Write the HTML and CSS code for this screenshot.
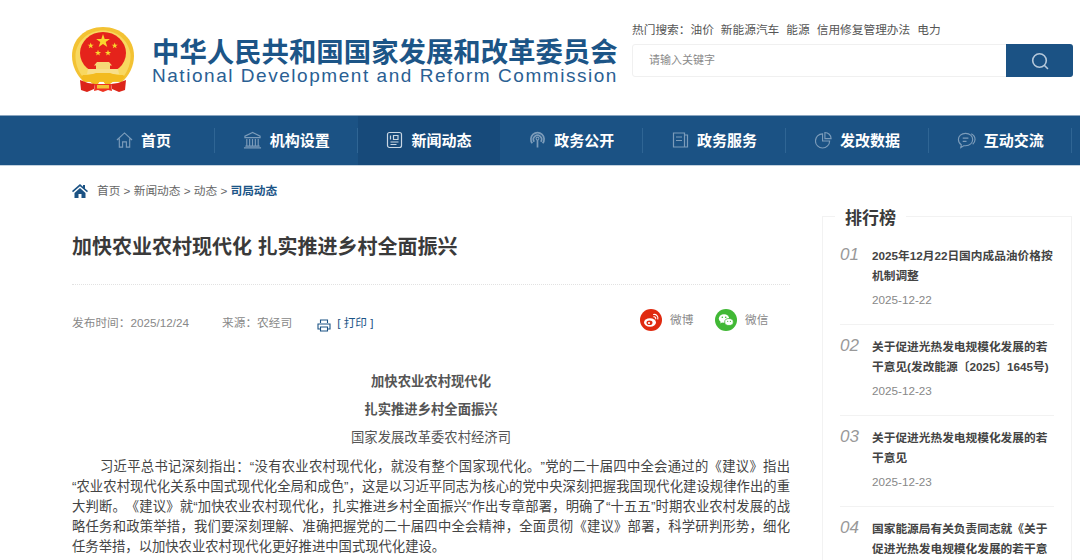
FILE: index.html
```html
<!DOCTYPE html>
<html lang="zh-CN">
<head>
<meta charset="utf-8">
<title>加快农业农村现代化 扎实推进乡村全面振兴</title>
<link rel="stylesheet" href="styles.css">
</head>
<body>
<header class="header">
  <div class="brand">
    <svg class="emblem" viewBox="0 0 62 66" aria-hidden="true">
      <path d="M31 0C13 0 0 12 0 29c0 10 5 20 12 26h38c7-6 12-16 12-26C62 12 49 0 31 0z" fill="#f3c233"/>
      <path d="M31 3.500C17 3.500 5.500 13 3.500 27 3 36 6 44 11 50c4-2 8-3 10-3h20c2 0 6 1 10 3 5-6 8-14 7.500-23C56.500 13 45 3.500 31 3.500z" fill="#f8d860"/>
      <ellipse cx="31" cy="26" rx="23" ry="21" fill="#e5231b"/>
      <path d="M31 7l1.700 4.900h5.200l-4.200 3.100 1.600 5-4.300-3.100-4.300 3.100 1.600-5-4.200-3.100h5.200z" fill="#f9d72e"/>
      <path d="M18.700 15.500l.8 2.200h2.300l-1.900 1.400.7 2.200-1.900-1.300-1.900 1.300.7-2.200-1.900-1.400h2.300zM42.700 15.500l.8 2.200h2.300l-1.900 1.400.7 2.200-1.900-1.300-1.900 1.300.7-2.200-1.900-1.400h2.300zM26 22.800l.8 2.200h2.300l-1.900 1.400.7 2.200-1.900-1.300-1.900 1.300.7-2.200-1.900-1.400h2.300zM36 22.800l.8 2.200h2.300l-1.900 1.400.7 2.200-1.900-1.300-1.900 1.300.7-2.200-1.900-1.400h2.300z" fill="#f9d72e"/>
      <path d="M25 35h12l3 3.500h-2v3.500H24v-3.500h-2z" fill="#f6d977"/>
      <path d="M16 42h30l1 5H15z" fill="#f8df8a"/>
      <path d="M9 50l2-2 7 0 6-2h14l6 2 7 0 2 2-5 4-6 0-4 3h-5l-2-3-3 0-2 3h-5l-4-3-6 0z" fill="#f3bb1f"/>
      <path d="M8 53l8 3 7 1-1 5-7 3-6-2zM54 53l-8 3-7 1 1 5 7 3 6-2z" fill="#dc2419"/>
      <path d="M23 57h16l1 7-4-1-5 2-5-2-4 1z" fill="#ee3322"/>
      <path d="M25 58h12v3.500H25z" fill="#f3c233"/>
    </svg>
    <div class="brand-text">
      <div class="brand-cn">中华人民共和国国家发展和改革委员会</div>
      <div class="brand-en">National Development and Reform Commission</div>
    </div>
  </div>
  <div class="search-area">
    <div class="hot">
      <span>热门搜索：</span><span>油价</span><span>新能源汽车</span><span>能源</span><span>信用修复管理办法</span><span>电力</span>
    </div>
    <div class="search">
      <div class="search-input">请输入关键字</div>
      <div class="search-btn">
        <svg viewBox="0 0 20 20" class="search-icon" aria-hidden="true">
          <circle cx="9.500" cy="9.500" r="6.800" fill="none" stroke="#b5c8da" stroke-width="1.600"/>
          <path d="M14.500 14.500l3 3" stroke="#b5c8da" stroke-width="1.600" stroke-linecap="round"/>
        </svg>
      </div>
    </div>
  </div>
</header>

<nav class="nav">
  <a class="nav-item">
    <svg class="nav-icon" viewBox="0 0 18 18" aria-hidden="true"><path d="M1 9l8-7.500L17 9M3.500 7.500V16.500H7V11h4v5.500h3.500V7.500"/></svg>首页
  </a>
  <a class="nav-item">
    <svg class="nav-icon wide" viewBox="0 0 20 18" aria-hidden="true"><path d="M10 1L2 5v1.500h16V5zM4 8v7M7 8v7M10 8v7M13 8v7M16 8v7M2.500 15.500h15M1 17.300h18"/></svg>机构设置
  </a>
  <a class="nav-item active">
    <svg class="nav-icon" viewBox="0 0 16 18" aria-hidden="true"><rect x="1" y="1.500" width="14" height="15" rx="2"/><path d="M4 4.500v4M7 4.500h4.500v4H7zM4 11h8M4 13.500h6"/></svg>新闻动态
  </a>
  <a class="nav-item">
    <svg class="nav-icon" viewBox="0 0 18 18" aria-hidden="true"><path d="M9 17V9M3.500 12.500a7 7 0 1 1 11 0M5.500 10.800a4.300 4.300 0 1 1 7 0" stroke-width="1.800"/><circle cx="9" cy="7.500" r="1.500"/></svg>政务公开
  </a>
  <a class="nav-item">
    <svg class="nav-icon" viewBox="0 0 16 18" aria-hidden="true"><path d="M1 2h11v14H1zM12 4h3v12h-3M3.500 6h6M3.500 9.500h6"/></svg>政务服务
  </a>
  <a class="nav-item">
    <svg class="nav-icon" viewBox="0 0 18 18" aria-hidden="true"><path d="M8 2.500a7.500 7.500 0 1 0 7.500 7.500H8z"/><path d="M10.500 1a6.500 6.500 0 0 1 6.500 6.500h-6.500z"/></svg>发改数据
  </a>
  <a class="nav-item">
    <svg class="nav-icon wide" viewBox="0 0 20 18" aria-hidden="true"><path d="M9 2c4.500 0 7.500 2.800 7.500 6.500S13.500 15 9 15H7l-3 2 .5-3C2.500 12.800 1.500 10.800 1.500 8.500 1.500 4.800 4.500 2 9 2z"/><path d="M15 2.500c2.500 1.200 4 3.400 4 6 0 2-1 3.800-2.500 5M6 7h6M6 10.500h4"/></svg>互动交流
  </a>
</nav>

<main class="main">
  <article class="article">
    <div class="crumbs">
      <svg class="crumb-home" viewBox="0 0 16 14" aria-hidden="true"><path d="M8 0L0 7l1 1.200L8 2.200l7 6L16 7l-3-2.600V1h-2v1.700zM2.500 9v5h4v-4h3v4h4V9L8 4z"/></svg>
      <span>首页 &gt; 新闻动态 &gt; 动态 &gt; <b class="crumb-current">司局动态</b></span>
    </div>
    <h1 class="title">加快农业农村现代化 扎实推进乡村全面振兴</h1>
    <div class="meta">
      <span class="meta-date">发布时间：2025/12/24</span>
      <span class="meta-source">来源：农经司</span>
      <svg class="print-icon" viewBox="0 0 14 13" aria-hidden="true"><path d="M3.500 4V1h7v3M3 10H1V5h12v5h-2M3.500 8h7v4h-7z"/></svg>
      <span class="print">[ 打印 ]</span>
      <span class="share">
        <svg class="share-icon" viewBox="0 0 22 22" aria-hidden="true"><circle cx="11" cy="11" r="11" fill="#e02a10"/><ellipse cx="10" cy="13.500" rx="6" ry="4.200" fill="#fff"/><ellipse cx="9.500" cy="13.800" rx="3" ry="2.300" fill="#e02a10"/><circle cx="9" cy="14" r="1.100" fill="#fff"/><path d="M13.500 5.500c2.800-.5 5 1.800 4.300 4.500M13.800 7.800c1.300-.2 2.200.8 1.900 2" fill="none" stroke="#fff" stroke-width="1.100" stroke-linecap="round"/></svg>
        <span class="share-text">微博</span>
        <svg class="share-icon" viewBox="0 0 22 22" aria-hidden="true"><circle cx="11" cy="11" r="11" fill="#41b835"/><ellipse cx="9" cy="9.500" rx="5.200" ry="4.300" fill="#fff"/><path d="M6 12.500l-1 2 2.500-1.200z" fill="#fff"/><ellipse cx="14" cy="13" rx="4.300" ry="3.500" fill="#fff" stroke="#41b835" stroke-width=".8"/><circle cx="7.300" cy="8.300" r=".8" fill="#41b835"/><circle cx="10.700" cy="8.300" r=".8" fill="#41b835"/><circle cx="12.700" cy="12.300" r=".6" fill="#41b835"/><circle cx="15.400" cy="12.300" r=".6" fill="#41b835"/></svg>
        <span class="share-text">微信</span>
      </span>
    </div>
    <div class="body">
      <p class="center strong">加快农业农村现代化</p>
      <p class="center strong">扎实推进乡村全面振兴</p>
      <p class="center">国家发展改革委农村经济司</p>
      <p class="para">习近平总书记深刻指出：“没有农业农村现代化，就没有整个国家现代化。”党的二十届四中全会通过的《建议》指出“农业农村现代化关系中国式现代化全局和成色”，这是以习近平同志为核心的党中央深刻把握我国现代化建设规律作出的重大判断。《建议》就“加快农业农村现代化，扎实推进乡村全面振兴”作出专章部署，明确了“十五五”时期农业农村发展的战略任务和政策举措，我们要深刻理解、准确把握党的二十届四中全会精神，全面贯彻《建议》部署，科学研判形势，细化任务举措，以加快农业农村现代化更好推进中国式现代化建设。</p>
    </div>
  </article>

  <aside class="rank">
    <h2 class="rank-title">排行榜</h2>
    <ol class="rank-list">
      <li class="rank-item">
        <span class="rank-num">01</span>
        <div class="rank-body"><div class="rank-name">2025年12月22日国内成品油价格按机制调整</div><div class="rank-date">2025-12-22</div></div>
      </li>
      <li class="rank-item">
        <span class="rank-num">02</span>
        <div class="rank-body"><div class="rank-name">关于促进光热发电规模化发展的若干意见(发改能源〔2025〕1645号)</div><div class="rank-date">2025-12-23</div></div>
      </li>
      <li class="rank-item">
        <span class="rank-num">03</span>
        <div class="rank-body"><div class="rank-name">关于促进光热发电规模化发展的若干意见</div><div class="rank-date">2025-12-23</div></div>
      </li>
      <li class="rank-item">
        <span class="rank-num">04</span>
        <div class="rank-body"><div class="rank-name">国家能源局有关负责同志就《关于促进光热发电规模化发展的若干意</div></div>
      </li>
    </ol>
  </aside>
</main>
</body>
</html>
```

FILE: styles.css
```css
* { box-sizing: border-box; }
html, body { margin: 0; padding: 0; height: 560px; overflow: hidden; background: #fff; }
body { font-family: "Liberation Sans", "Noto Sans CJK SC", sans-serif; color: #444; font-size: 14px; text-spacing-trim: space-all; }

.header { height: 115px; display: flex; justify-content: space-between; padding: 0 7px 0 72px; }
.brand { display: flex; align-items: flex-start; padding-top: 27px; }
.emblem { width: 62px; height: 66px; flex: none; }
.brand-text { margin-left: 18px; padding-top: 12px; width: 466px; color: #1c5587; }
.brand-cn { font-size: 27.400px; line-height: 28px; font-weight: 700; white-space: nowrap; }
.brand-en { font-size: 19px; line-height: 18px; letter-spacing: 1.540px; white-space: nowrap; color: #2a6093; }

.search-area { width: 441px; padding-top: 21px; }
.hot { display: flex; gap: 7px; font-size: 11.700px; line-height: 17px; color: #555; white-space: nowrap; }
.hot span:first-child { margin-right: -7px; }
.search { display: flex; height: 33px; margin-top: 6px; border: 1px solid #f0f0f0; border-radius: 3px; }
.search-input { flex: 1; padding-left: 16px; font-size: 11px; line-height: 31px; color: #8a8a8a; }
.search-btn { width: 67px; margin: -1px; background: #1b5284; border-radius: 0 3px 3px 0; display: flex; align-items: center; justify-content: center; }
.search-icon { width: 20px; height: 20px; }

.nav { height: 51px; padding: 0 0 0 72px; display: flex; background: #1b5284; border-top: 1px solid #8ba6c0; border-bottom: 1px solid #c3d2df; }
.nav-item { position: relative; width: 142.800px; height: 49px; padding-bottom: 2px; display: flex; align-items: center; justify-content: center; gap: 8px; color: #fff; font-size: 15px; font-weight: 700; }
.nav-item::after { content: ""; position: absolute; right: 0; top: 12px; height: 25px; width: 1px; background: #2f6594; }
.nav-item.active { background: #174a7a; }
.nav-item.active::after { display: none; }
.nav-icon { width: 17px; height: 18px; fill: none; stroke: #7c9cba; stroke-width: 1.200; flex: none; }
.nav-icon.wide { width: 19px; }
.active .nav-icon { stroke: #c8d6e3; }

.main { display: flex; padding-left: 72px; gap: 32px; align-items: flex-start; }
.article { width: 718px; flex: none; }
.crumbs { display: flex; align-items: center; gap: 9px; padding-top: 15px; height: 34px; font-size: 11.700px; line-height: 17px; color: #666; }
.crumb-home { width: 16px; height: 14px; fill: #1b5284; flex: none; }
.crumb-current { color: #1c5587; }

.title { margin: 0; padding: 30px 0 21px; height: 85px; border-bottom: 1px dotted #e2e2e2; font-size: 20px; line-height: 34px; font-weight: 700; color: #3a3a3a; }
.meta { display: flex; align-items: center; padding-top: 14px; height: 62px; font-size: 11.700px; line-height: 28px; color: #888; }
.meta-date { width: 150px; }
.print-icon { width: 14px; height: 13px; margin-left: 25px; margin-top: 5px; fill: none; stroke: #1b5284; stroke-width: 1.100; }
.print { margin-left: 6px; color: #1c5587; }
.share { margin-left: auto; margin-right: 22px; display: flex; align-items: center; margin-top: -7px; white-space: nowrap; }
.share-icon { width: 22px; height: 22px; margin-right: 8px; }
.share-text { width: 45px; }
.share-text:last-child { width: 23px; }

.body { padding-top: 21px; }
.body p { margin: 0; }
.center { text-align: center; font-size: 13.330px; line-height: 28px; color: #555; }
.strong { font-weight: 700; }
.para { font-size: 13.330px; text-indent: 28px; text-align: justify; line-height: 20px; color: #444; padding-top: 5px; }

.rank { width: 250px; flex: none; margin-top: 50px; height: 400px; border: 1px solid #f2f2f2; border-bottom: 0; padding: 0 17px; }
.rank-title { width: fit-content; margin: -11px 0 0 -5px; padding: 0 10px; height: 26px; background: #fff; font-size: 17px; line-height: 26px; font-weight: 700; color: #3a3a3a; }
.rank-list { list-style: none; margin: 2px 0 0; padding: 0; }
.rank-item { display: flex; padding: 12px 0 14px; height: 91px; border-bottom: 1px solid #f2f2f2; }
.rank-num { width: 32px; flex: none; font-size: 17px; line-height: 18px; font-style: italic; color: #999; }
.rank-body { width: 183px; }
.rank-name { font-size: 11.700px; line-height: 20px; font-weight: 700; color: #444; height: 40px; overflow: hidden; }
.rank-date { margin-top: 4px; font-size: 11.700px; line-height: 20px; color: #888; }
```
